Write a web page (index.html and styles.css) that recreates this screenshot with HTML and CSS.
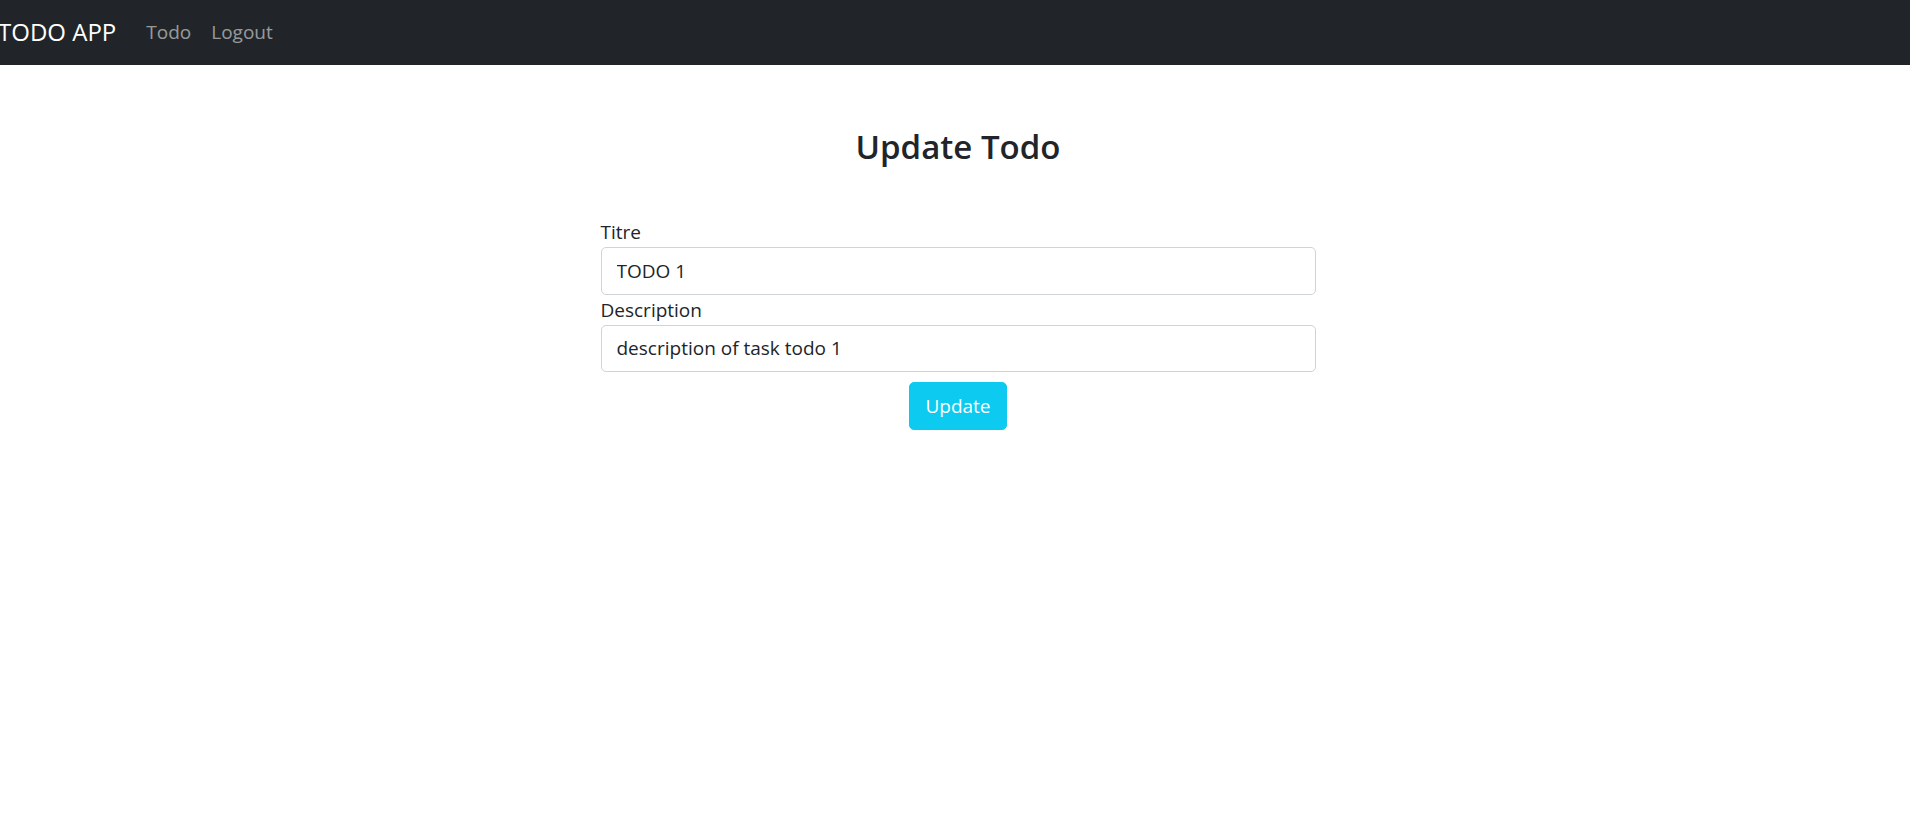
FILE: index.html
```html
<!DOCTYPE html>
<html lang="fr">
<head>
<meta charset="utf-8">
<title>TODO APP</title>
<link rel="stylesheet" href="styles.css">
</head>
<body>
<nav class="navbar">
  <a class="brand" href="#">TODO APP</a>
  <ul class="nav">
    <li><a class="nav-link" href="#">Todo</a></li>
    <li><a class="nav-link" href="#">Logout</a></li>
  </ul>
</nav>
<main class="page">
  <div class="content">
    <h3 class="title">Update Todo</h3>
    <form class="form">
      <label class="label" for="titre">Titre</label>
      <input class="input" id="titre" type="text" value="TODO 1">
      <label class="label" for="desc">Description</label>
      <input class="input" id="desc" type="text" value="description of task todo 1">
      <div class="actions">
        <button class="btn" type="button">Update</button>
      </div>
    </form>
  </div>
</main>
</body>
</html>
```
FILE: styles.css
```css
* { box-sizing: border-box; }
html, body { margin: 0; padding: 0; }
body {
  font-family: "Open Sans", "Noto Sans", sans-serif;
  font-size: 19px;
  line-height: 30px;
  color: #212529;
  background: #fff;
}
.navbar {
  height: 65px;
  background: #212529;
  display: flex;
  align-items: center;
}
.brand {
  color: #fff;
  text-decoration: none;
  font-size: 24px;
  line-height: 37px;
  margin-right: 20px;
  margin-left: -2px;
  margin-top: -2px;
}
.nav {
  list-style: none;
  margin: 0;
  padding: 0;
  display: flex;
}
.nav-link {
  display: block;
  padding: 0 10px;
  color: rgba(255,255,255,.55);
  text-decoration: none;
  font-size: 19px;
  margin-top: -1px;
}
.page {
  padding-left: 6px;
}
.content {
  width: 715px;
  margin: 0 auto;
}
.title {
  margin: 61px 0 49px;
  text-align: center;
  font-size: 33px;
  font-weight: 600;
  line-height: 42px;
}
.form {
  display: flex;
  flex-direction: column;
}
.label {
  display: block;
  height: 30px;
}
.input {
  display: block;
  width: 100%;
  height: 47.5px;
  padding: 7.5px 15px;
  font-family: inherit;
  font-size: 19px;
  line-height: 30px;
  color: #212529;
  border: 1px solid #ced4da;
  border-radius: 5px;
  background: #fff;
}
.actions {
  display: flex;
  justify-content: center;
  margin-top: 10px;
}
.btn {
  font-family: inherit;
  font-size: 19px;
  line-height: 30px;
  padding: 7.5px 15px;
  height: 47.5px;
  color: #fff;
  background: #0dcaf0;
  border: 1px solid #0dcaf0;
  border-radius: 5px;
}
```
